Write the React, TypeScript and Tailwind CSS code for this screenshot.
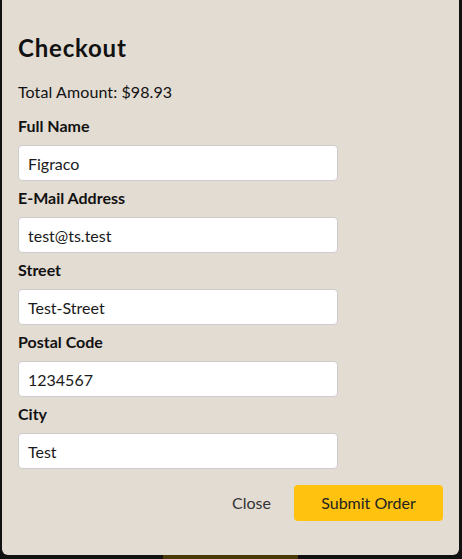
import React from 'react';

const fields = [
  { id: 'name', label: 'Full Name', value: 'Figraco' },
  { id: 'email', label: 'E-Mail Address', value: 'test@ts.test' },
  { id: 'street', label: 'Street', value: 'Test-Street' },
  { id: 'postal', label: 'Postal Code', value: '1234567' },
  { id: 'city', label: 'City', value: 'Test' },
];

export default function App() {
  return (
    <div className="h-[559px] w-[462px] overflow-hidden bg-[#111111] px-[2px] font-['Lato','Liberation_Sans',sans-serif] text-[#111111]">
      <div className="w-[457px] rounded-b-md bg-[#e3dcd3] px-4 pt-8 pb-[34px]">
        <h2 className="m-0 text-2xl leading-8 font-bold tracking-[0.8px]">Checkout</h2>
        <p className="mt-4 text-base leading-6 tracking-[0.1px]">Total Amount: $98.93</p>

        <form onSubmit={(e) => e.preventDefault()}>
          {fields.map((f, i) => (
            <div key={f.id} className={i === 0 ? 'mt-[10px]' : 'mt-[5px]'}>
              <label htmlFor={f.id} className="block text-base leading-6 font-bold">
                {f.label}
              </label>
              <input
                id={f.id}
                defaultValue={f.value}
                className="mt-[7px] block h-9 w-[320px] rounded border border-[#cccccc] bg-white px-[9px] text-base text-[#1a1a1a] outline-none"
              />
            </div>
          ))}

          <div className="mt-4 flex items-center justify-end gap-[23px]">
            <button type="button" className="h-9 text-base text-[#333333]">
              Close
            </button>
            <button type="submit" className="h-9 w-[149px] rounded bg-[#ffc20e] text-base text-[#222222]">
              Submit Order
            </button>
          </div>
        </form>
      </div>
      <div className="ml-[161px] h-1 w-[135px] bg-[#4a3a08]" />
    </div>
  );
}
